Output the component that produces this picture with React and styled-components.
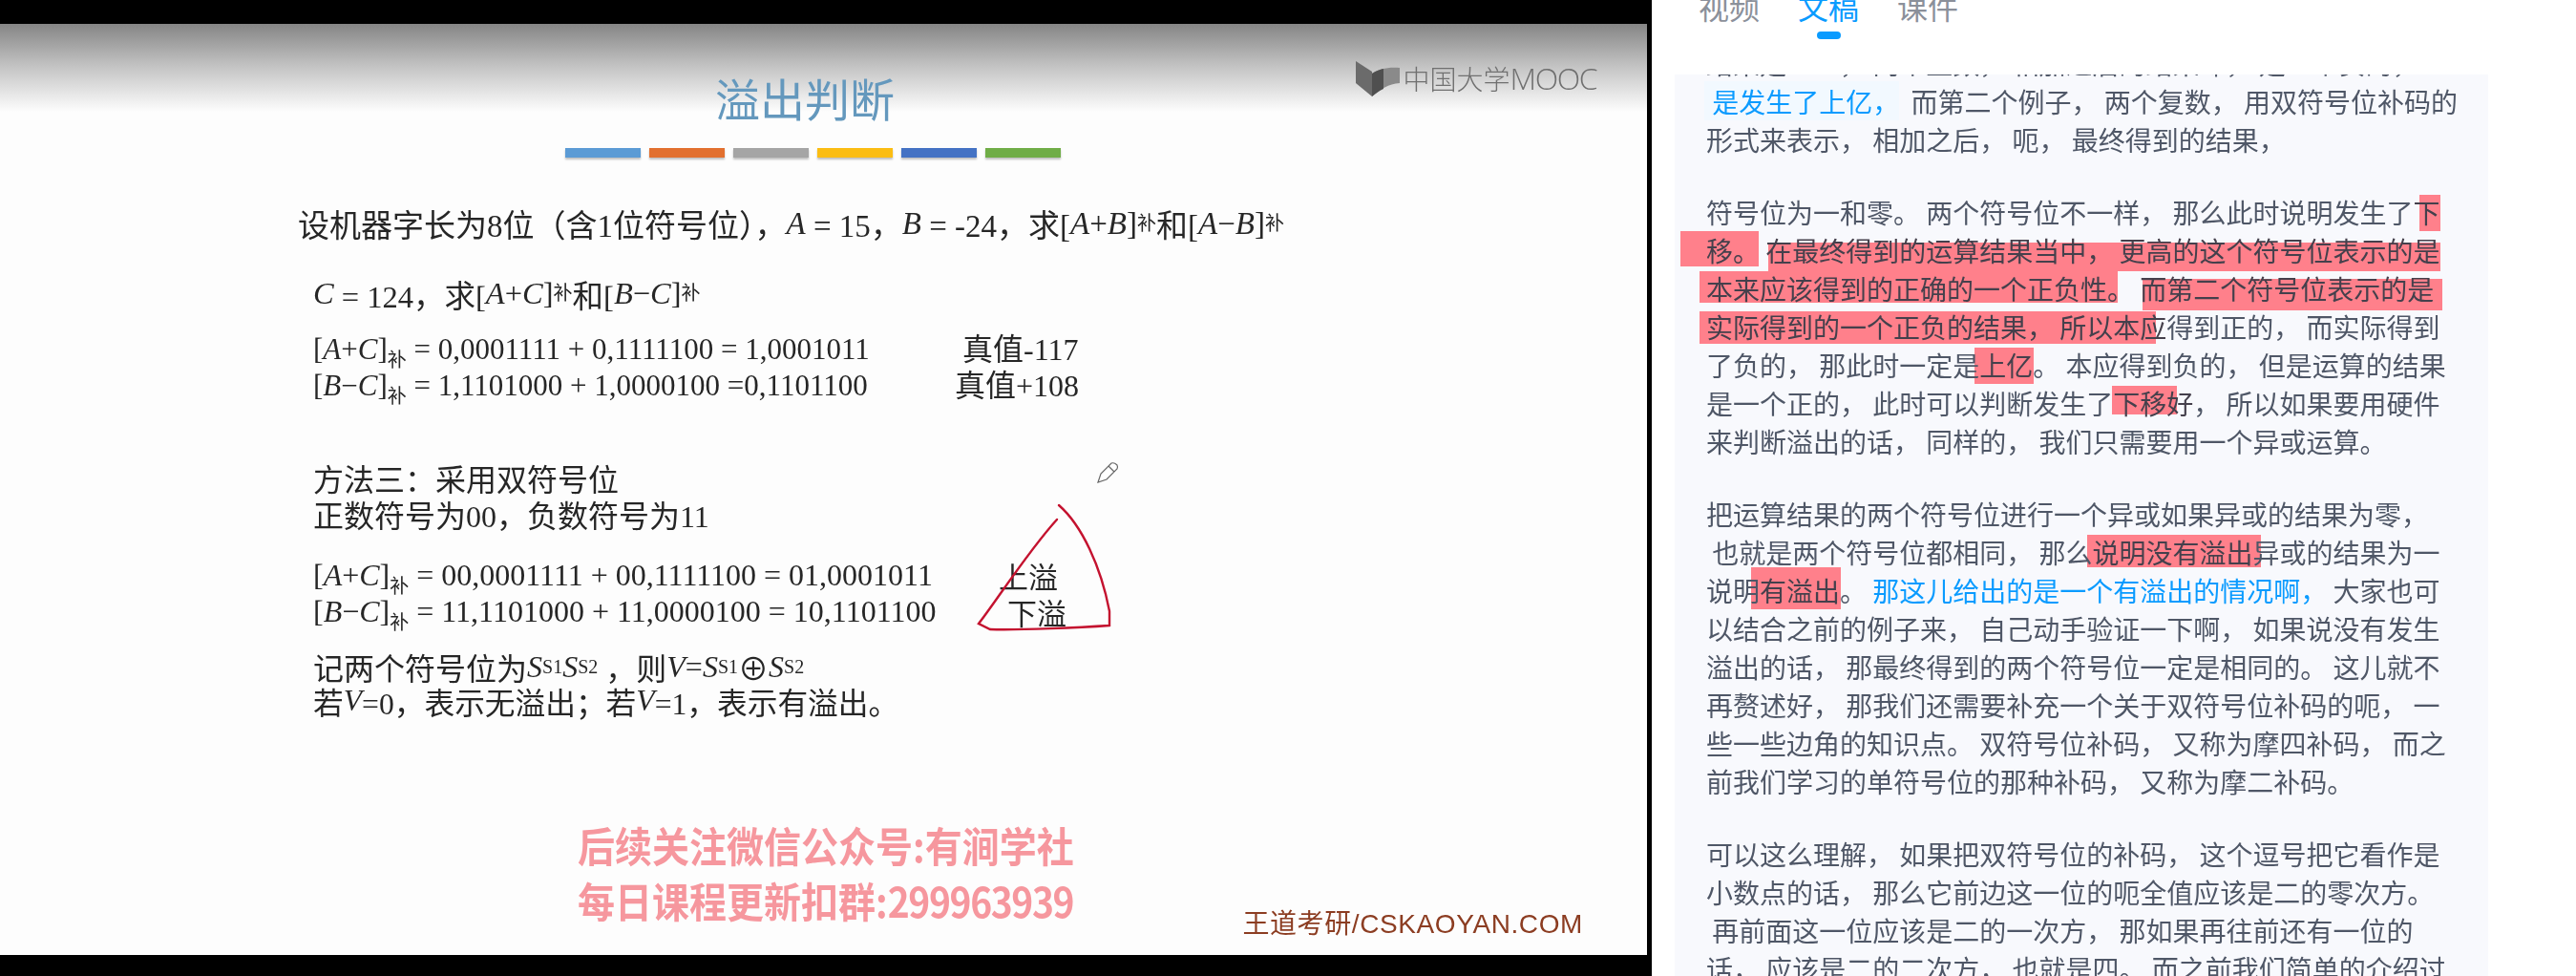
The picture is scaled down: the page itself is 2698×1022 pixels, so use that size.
import React from "react";
import styled, { createGlobalStyle } from "styled-components";

const GlobalStyle = createGlobalStyle`
  * {
    box-sizing: border-box;
  }

  html, body {
    margin: 0;
    padding: 0;
    background: #fff;
  }
`;

const Page = styled.div`
  display: flex;
  width: 2698px;
  height: 1022px;
  overflow: hidden;
  background: #fff;
`;

const Video = styled.div`
  flex: none;
  width: 1730px;
  height: 1022px;
  padding: 25px 5px 22px 0;
  background: #000;
`;

const Slide = styled.div`
  position: relative;
  height: 975px;
  display: flex;
  flex-direction: column;
  color: #262626;
  font-family: "Liberation Serif", "Noto Sans CJK SC", serif;
  background: linear-gradient(#858585 0, #c4c4c4 45px, #fdfdfd 92px);
  filter: blur(0.4px);
`;

const Header = styled.div`
  display: flex;
  align-items: flex-start;
  height: 106px;
  padding: 38px 53px 0 749px;
`;

const Title = styled.h1`
  margin: 15px 0 0;
  font: 400 47px/47px "Noto Sans CJK SC", sans-serif;
  color: #6498bd;
`;

const Logo = styled.div`
  display: flex;
  align-items: center;
  gap: 4px;
  margin-left: auto;
  color: #707070;
  font: 300 28px/37px "Noto Sans CJK SC", sans-serif;
`;

const LogoLatin = styled.span`
  font: 300 32px/37px "Open Sans", sans-serif;
  letter-spacing: -1.5px;
`;

const Bars = styled.div`
  display: flex;
  gap: 9px;
  margin: 24px 0 0 592px;
`;

const Bar = styled.div`
  width: 79px;
  height: 10px;
  background: ${(p) => p.$color};
  box-shadow: 0 2px 2px rgba(0, 0, 0, 0.25);
`;

const Lines = styled.div`
  display: flex;
  flex-direction: column;
  padding-left: 328px;
  margin-top: 50px;
`;

const Row = styled.div`
  display: flex;
  align-items: center;
  height: 38px;
  margin-top: ${(p) => p.$gap || 0}px;
  margin-left: ${(p) => p.$indent || 0}px;
  font-size: ${(p) => p.$size || 32}px;
  white-space: pre;
`;

const Expr = styled.span`
  flex: none;
  width: ${(p) => p.$width}px;
  font-size: ${(p) => p.$size || 31}px;
`;

const Note = styled.span`
  margin-bottom: 6px;
  font-size: 32px;
`;

const OverflowNote = styled.span`
  font-family: "Noto Sans CJK SC", sans-serif;
  font-size: 31px;
`;

const Var = styled.i`
  font-family: "Liberation Serif", serif;
`;

const Sub = styled.sub`
  font-size: 20px;
  line-height: 0;
  vertical-align: -8px;
`;

const Footer = styled.div`
  display: flex;
  align-items: flex-end;
  margin-top: 108px;
  padding: 0 67px 0 605px;
`;

const Promo = styled.div`
  color: #f6979e;
  font: 700 39px/52px "Noto Sans CJK SC", sans-serif;
  white-space: nowrap;
  transform: scaleY(1.12);
`;

const PromoDigits = styled.span`
  letter-spacing: -1.4px;
`;

const Brand = styled.div`
  margin: 0 0 -20px auto;
  color: #8c3d22;
  font: 400 28px/34px "Liberation Sans", "Noto Sans CJK SC", sans-serif;
  letter-spacing: 0.6px;
  white-space: nowrap;
`;

const Annotation = styled.svg`
  position: absolute;
  left: 1000px;
  top: 435px;
  width: 220px;
  height: 220px;
`;

const Aside = styled.div`
  flex: 1;
  display: flex;
  flex-direction: column;
  min-width: 0;
  font-family: "Noto Sans CJK SC", sans-serif;
  background: #fff;
`;

const Tabs = styled.div`
  display: flex;
  gap: 40px;
  height: 57px;
  margin: -16px 0 37px;
  padding-left: 49px;
`;

const Tab = styled.div`
  display: flex;
  flex-direction: column;
  align-items: center;
  gap: 5px;
  font-size: 32px;
  line-height: 44px;
  color: ${(p) => (p.$active ? "#0a9bff" : "#8b909a")};
`;

const TabPill = styled.span`
  width: 25px;
  height: 8px;
  border-radius: 4px;
  background: #0a9bff;
`;

const Panel = styled.div`
  flex: 1;
  isolation: isolate;
  width: 852px;
  margin-left: 24px;
  padding-left: 33px;
  overflow: hidden;
  background: #f8f9fd;
  filter: blur(0.3px);
`;

const Scroll = styled.div`
  margin-top: -32px;
`;

const Paragraph = styled.div`
  margin-bottom: 36px;
`;

const TextLine = styled.div`
  font-size: 28px;
  line-height: 40px;
  height: 40px;
  color: #4f5767;
  white-space: pre;
`;

const Blue = styled.span`
  color: #0a9bff;
`;

const Mark = styled.span`
  position: relative;
  margin-right: ${(p) => p.$after || 0}px;
  color: ${(p) => (p.$tone === "blue" ? "#0a9bff" : "#45404c")};

  &::before {
    content: "";
    position: absolute;
    z-index: -1;
    left: ${(p) => p.$l || 0}px;
    right: ${(p) => p.$r || 0}px;
    top: ${(p) => p.$t || 0}px;
    bottom: ${(p) => p.$b || 0}px;
    background: ${(p) => (p.$tone === "blue" ? "#f2f9ff" : "#ff808b")};
  }
`;

const barColors = ["#5b9bd5", "#e2702f", "#a5a5a5", "#fbbd13", "#4472c4", "#70ad47"];

const Bu = () => <Sub>补</Sub>;

const App = () => {
  return (
    <Page>
      <GlobalStyle />
      <Video>
        <Slide>
          <Header>
            <Title>溢出判断</Title>
            <Logo>
              <svg width="46" height="37" viewBox="0 0 46 37">
                <path d="M0 0 L17 11 V37 L0 23 Z" fill="#6b6b6b" />
                <path d="M17 37 V13 C24 8 34 6 46 7 V23 C34 24 26 29 17 37 Z" fill="#8a8a8a" />
                <path d="M17 37 V13 C22 10 25 9 29 8 V29 C24 31 21 34 17 37 Z" fill="#4f4f4f" />
              </svg>
              <span>
                中国大学<LogoLatin>MOOC</LogoLatin>
              </span>
            </Logo>
          </Header>

          <Bars>
            {barColors.map((color) => (
              <Bar key={color} $color={color} />
            ))}
          </Bars>

          <Lines>
            <Row $indent={-16} $size={33}>
              设机器字长为8位（含1位符号位），<Var>A</Var> = 15，<Var>B</Var> = -24，求[<Var>A</Var>+<Var>B</Var>]<Bu />和[<Var>A</Var>−<Var>B</Var>]<Bu />
            </Row>
            <Row $gap={35} $size={32.5}>
              <Var>C</Var> = 124，求[<Var>A</Var>+<Var>C</Var>]<Bu />和[<Var>B</Var>−<Var>C</Var>]<Bu />
            </Row>
            <Row $gap={21}>
              <Expr $width={680}>
                [<Var>A</Var>+<Var>C</Var>]<Bu /> = 0,0001111 + 0,1111100 = 1,0001011
              </Expr>
              <Note>真值-117</Note>
            </Row>
            <Row>
              <Expr $width={672}>
                [<Var>B</Var>−<Var>C</Var>]<Bu /> = 1,1101000 + 1,0000100 =0,1101100
              </Expr>
              <Note>真值+108</Note>
            </Row>
            <Row $gap={58}>方法三：采用双符号位</Row>
            <Row>正数符号为00，负数符号为11</Row>
            <Row $gap={26}>
              <Expr $width={718} $size={32}>
                [<Var>A</Var>+<Var>C</Var>]<Bu /> = 00,0001111 + 00,1111100 = 01,0001011
              </Expr>
              <OverflowNote>上溢</OverflowNote>
            </Row>
            <Row>
              <Expr $width={727} $size={32}>
                [<Var>B</Var>−<Var>C</Var>]<Bu /> = 11,1101000 + 11,0000100 = 10,1101100
              </Expr>
              <OverflowNote>下溢</OverflowNote>
            </Row>
            <Row $gap={20}>
              记两个符号位为<Var>S</Var><Sub>S1</Sub><Var>S</Var><Sub>S2</Sub> ，则<Var>V</Var>=<Var>S</Var><Sub>S1</Sub>⊕<Var>S</Var><Sub>S2</Sub>
            </Row>
            <Row $gap={-2} $size={31.7}>
              若<Var>V</Var>=0，表示无溢出；若<Var>V</Var>=1，表示有溢出。
            </Row>
          </Lines>

          <Footer>
            <Promo>
              后续关注微信公众号:有涧学社
              <br />
              每日课程更新扣群:<PromoDigits>299963939</PromoDigits>
            </Promo>
            <Brand>王道考研/CSKAOYAN.COM</Brand>
          </Footer>

          <Annotation viewBox="0 0 220 220" fill="none">
            <path
              d="M109 69 C133 90 153 133 162 180 L162 195 C133 197 67 200 37 199 L25 193 C43 170 77 117 107 84"
              stroke="#c4122f"
              strokeWidth="2.4"
              strokeLinecap="round"
            />
            <path
              d="M150 45 L153 36 L164 25 Q167 24 170 27 Q171 29 170 31 L159 42 Z M161 28 L167 34"
              stroke="#666"
              strokeWidth="1.2"
              fill="#fff"
            />
          </Annotation>
        </Slide>
      </Video>

      <Aside>
        <Tabs>
          <Tab>视频</Tab>
          <Tab $active>
            文稿
            <TabPill />
          </Tab>
          <Tab>课件</Tab>
        </Tabs>

        <Panel>
          <Scroll>
            <Paragraph>
              <TextLine>结果是一一， 两个正数， 相加之后的结果却， 是一个负的，</TextLine>
              <TextLine>
                {" "}
                <Mark $tone="blue" $l={-8} $t={-1} $after={6}>是发生了上亿，</Mark> 而第二个例子， 两个复数， 用双符号位补码的
              </TextLine>
              <TextLine>形式来表示， 相加之后， 呃， 最终得到的结果，</TextLine>
            </Paragraph>

            <Paragraph>
              <TextLine>
                符号位为一和零。 两个符号位不一样， 那么此时说明发生了<Mark $l={6} $t={2}>下</Mark>
              </TextLine>
              <TextLine>
                <Mark $l={-27} $r={1} $b={3}>移。</Mark> <Mark $l={3} $t={12} $b={-2}>在最终得到的运算结果当中， 更高的这个符号位表示的是</Mark>
              </TextLine>
              <TextLine>
                <Mark $l={-7} $r={17} $t={2} $b={5}>本来应该得到的正确的一个正负性。</Mark> <Mark $l={3} $r={-9} $t={10} $b={-3}>而第二个符号位表示的是</Mark>
              </TextLine>
              <TextLine>
                <Mark $l={-7} $r={11} $t={4} $b={2}>实际得到的一个正负的结果， 所以本应</Mark>得到正的， 而实际得到
              </TextLine>
              <TextLine>
                了负的， 那此时一定是<Mark $l={-5} $r={-1} $t={2}>上亿</Mark>。 本应得到负的， 但是运算的结果
              </TextLine>
              <TextLine>
                是一个正的， 此时可以判断发生了<Mark $l={-1} $r={17} $t={2} $b={8}>下移好</Mark>， 所以如果要用硬件
              </TextLine>
              <TextLine>来判断溢出的话， 同样的， 我们只需要用一个异或运算。</TextLine>
            </Paragraph>

            <Paragraph>
              <TextLine>把运算结果的两个符号位进行一个异或如果异或的结果为零，</TextLine>
              <TextLine>
                {" "}也就是两个符号位都相同， 那么<Mark $l={-6} $r={-8} $t={2} $b={4}>说明没有溢出</Mark>异或的结果为一
              </TextLine>
              <TextLine>
                说明<Mark $l={-9} $r={-1} $t={-4}>有溢出</Mark>。 <Blue>那这儿给出的是一个有溢出的情况啊，</Blue> 大家也可
              </TextLine>
              <TextLine>以结合之前的例子来， 自己动手验证一下啊， 如果说没有发生</TextLine>
              <TextLine>溢出的话， 那最终得到的两个符号位一定是相同的。 这儿就不</TextLine>
              <TextLine>再赘述好， 那我们还需要补充一个关于双符号位补码的呃， 一</TextLine>
              <TextLine>些一些边角的知识点。 双符号位补码， 又称为摩四补码， 而之</TextLine>
              <TextLine>前我们学习的单符号位的那种补码， 又称为摩二补码。</TextLine>
            </Paragraph>

            <Paragraph>
              <TextLine>可以这么理解， 如果把双符号位的补码， 这个逗号把它看作是</TextLine>
              <TextLine>小数点的话， 那么它前边这一位的呃全值应该是二的零次方。</TextLine>
              <TextLine>{" "}再前面这一位应该是二的一次方， 那如果再往前还有一位的</TextLine>
              <TextLine>话， 应该是二的二次方， 也就是四。 而之前我们简单的介绍过</TextLine>
            </Paragraph>
          </Scroll>
        </Panel>
      </Aside>
    </Page>
  );
};

export default App;
